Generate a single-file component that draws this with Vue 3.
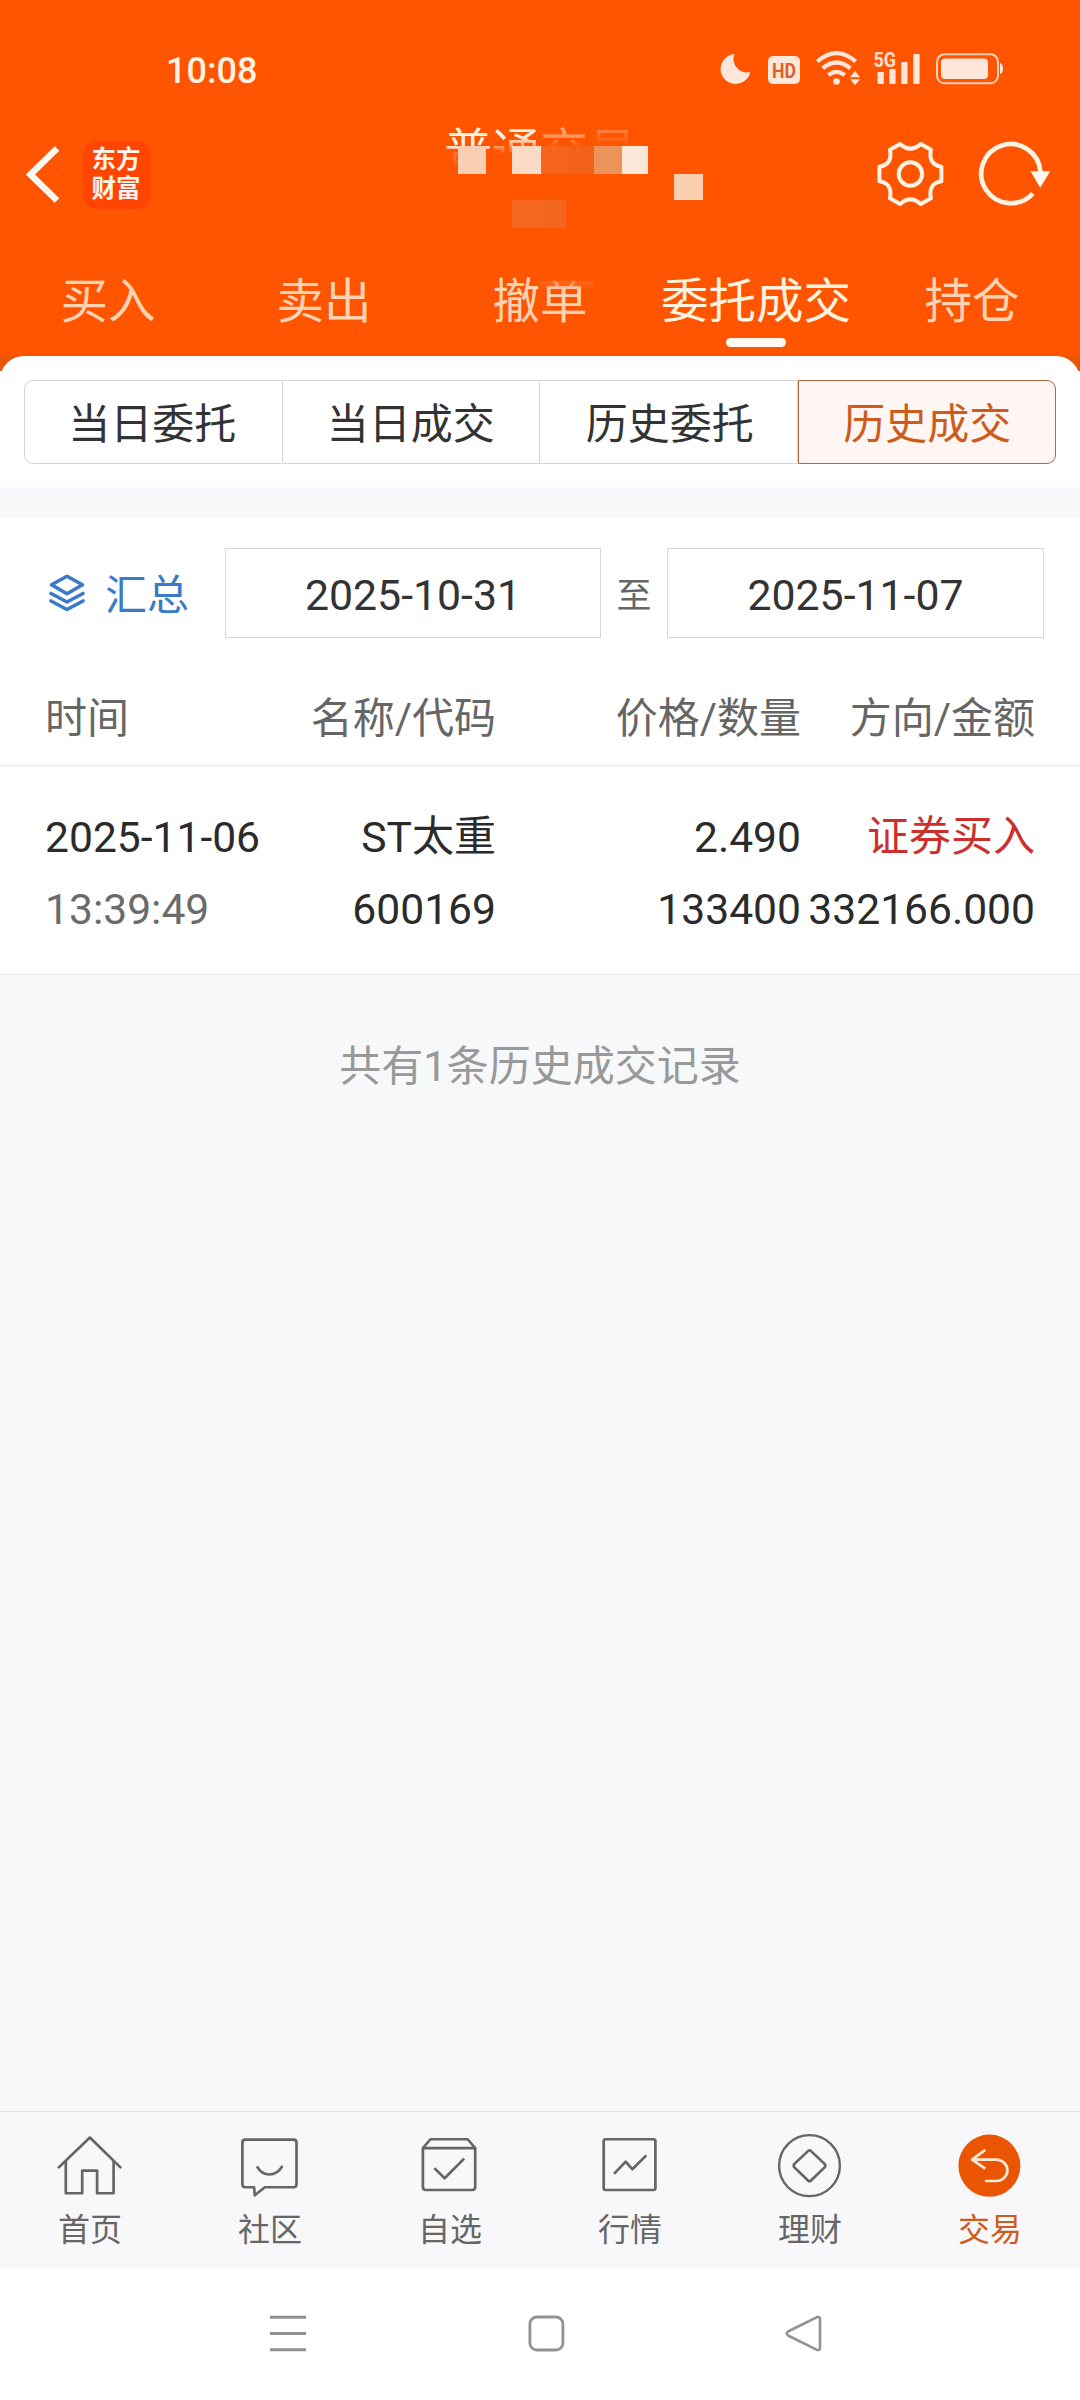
<script setup>
const tabs = ['买入', '卖出', '撤单', '委托成交', '持仓']
const segments = ['当日委托', '当日成交', '历史委托', '历史成交']
const titleChars = ['普', '通', '交', '易']
const mosaic = [
  { x: 458, y: 146, w: 28, h: 28, c: '#f9ceb2' },
  { x: 512, y: 146, w: 29, h: 28, c: '#fad9c5' },
  { x: 541, y: 146, w: 26, h: 28, c: '#f5661c' },
  { x: 567, y: 146, w: 27, h: 28, c: '#f4621a' },
  { x: 594, y: 146, w: 28, h: 28, c: '#ec935c' },
  { x: 622, y: 146, w: 26, h: 28, c: '#fbe7d7' },
  { x: 674, y: 174, w: 29, h: 26, c: '#facfb0' },
  { x: 512, y: 200, w: 29, h: 28, c: '#f66820' },
  { x: 541, y: 200, w: 25, h: 28, c: '#f2661e' },
]
const nav = ['首页', '社区', '自选', '行情', '理财', '交易']
</script>

<template>
  <div class="screen">
    <header class="head">
      <div class="status">
        <span class="clock">10:08</span>
        <svg class="sys" width="300" height="44" viewBox="710 46 300 44">
          <g fill="#ffe6da">
            <path d="M734.5 54 A15 15 0 1 0 750.3 72 A13.5 13.5 0 0 1 734.5 54Z" />
            <rect x="768" y="56" width="32" height="28" rx="5" />
            <circle cx="836.5" cy="81.5" r="3.3" />
            <path d="M850 77.3l5-6.6 5 6.6zM850 79.3l5 6 5-6z" />
            <rect x="877.5" y="72" width="6.3" height="12" rx="1" />
            <rect x="889.3" y="69" width="6.3" height="15" rx="1" />
            <rect x="901.2" y="62" width="6.3" height="22" rx="1" />
            <rect x="913.3" y="54" width="6.3" height="30" rx="1" />
            <rect x="941" y="58.5" width="47" height="20.5" rx="4" />
            <path d="M1000 63q3 1 3 5.500t-3 5.500z" />
          </g>
          <g fill="none" stroke="#ffe6da" stroke-width="4.200">
            <path d="M817.3 61.500Q836.500 44.800 855.700 61.500" />
            <path d="M822.700 68.400Q836.500 56.600 850.300 68.400" />
            <path d="M828.300 75.200Q836.500 68.400 844.700 75.200" />
          </g>
          <rect x="937" y="54.3" width="61" height="29" rx="7.500" fill="none" stroke="#ffd0b5" stroke-width="2" />
          <text x="784" y="78" text-anchor="middle" class="hd" textLength="24" lengthAdjust="spacingAndGlyphs">HD</text>
          <text x="873.500" y="67" class="g5" textLength="22.500" lengthAdjust="spacingAndGlyphs">5G</text>
        </svg>
      </div>

      <div class="bar">
        <svg width="34" height="60" viewBox="26 144 34 60" fill="none" stroke="#fff8ee" stroke-width="6.500">
          <path d="M57 148.500L30.500 174.500L57 200.500" stroke-linejoin="miter" />
        </svg>
        <div class="logo"><span>东方</span><span>财富</span></div>
        <div class="title"><span v-for="(c, i) in titleChars" :key="c" :class="'t' + i">{{ c }}</span></div>
        <svg class="tools" width="180" height="72" viewBox="874 138 180 72" fill="none" stroke="#fff3e3">
          <g transform="translate(910.4 174)" stroke-width="4" stroke-linejoin="round">
            <path d="M-10.300 -30Q0 -20.600 10.300 -30L20.500 -24.300Q17.500 -9.500 31 -7.300L31 7.300Q17.500 9.500 20.500 24.300L10.300 30Q0 20.600 -10.300 30L-20.500 24.300Q-17.500 9.500 -31 7.300L-31 -7.300Q-17.500 -9.500 -20.500 -24.300Z" />
            <circle r="11.700" />
          </g>
          <path d="M1032.800 193.500A29.600 29.600 0 1 1 1040.400 172" stroke-width="4.700" />
          <path d="M1030.500 171.200h19.700l-10 16.500z" fill="#fff8ee" stroke="none" />
        </svg>
      </div>

      <nav class="tabs">
        <div v-for="(t, i) in tabs" :key="t" class="tab" :class="{ on: i === 3, smear: i === 2 }">
          <span>{{ t }}</span><i />
        </div>
      </nav>
      <div v-for="(m, i) in mosaic" :key="i" class="px" :style="{ left: m.x + 'px', top: m.y + 'px', width: m.w + 'px', height: m.h + 'px', background: m.c }" />
    </header>

    <div class="shoulder">
      <section class="panel">
        <div class="segs">
          <div v-for="(s, i) in segments" :key="s" class="seg" :class="{ on: i === 3 }">{{ s }}</div>
        </div>
      </section>
    </div>
    <div class="gap" />

    <section class="filter">
      <svg width="36" height="40" viewBox="0 0 36 40" fill="none" stroke="#3b7ac6" stroke-width="3.600" stroke-linejoin="round" stroke-linecap="round">
        <path d="M18 3.200L33.500 11.800L18 20.700L2.500 11.800Z" />
        <path d="M2 20.500L18 29L34 20.500" />
        <path d="M2 28L18 36.500L34 28" />
      </svg>
      <span class="sum">汇总</span>
      <div class="date first">2025-10-31</div>
      <span class="to">至</span>
      <div class="date second">2025-11-07</div>
    </section>

    <div class="grid thead">
      <span>时间</span><span>名称/代码</span><span>价格/数量</span><span>方向/金额</span>
    </div>
    <section class="record">
      <div class="grid line">
        <span>2025-11-06</span><span>ST<b>太重</b></span><span>2.490</span><span class="buy">证券买入</span>
      </div>
      <div class="grid line">
        <span class="time">13:39:49</span><span>600169</span><span>133400</span><span>332166.000</span>
      </div>
    </section>

    <main class="rest">共有1条历史成交记录</main>

    <footer class="nav">
      <div v-for="(n, i) in nav" :key="n" class="item" :class="{ on: i === 5 }">
        <svg width="72" height="69.7" viewBox="0 0 72 72" preserveAspectRatio="none" fill="none" stroke="#666" stroke-width="2.700" stroke-linejoin="round">
          <template v-if="i === 0">
            <path d="M4 40.400L35.900 8.800L67.200 40.400" />
            <path d="M11.800 33V66.400H28.200V43H43.100V66.400H59.600V33" />
          </template>
          <template v-else-if="i === 1">
            <path d="M11.400 11H59.500Q62.500 11 62.500 14V57.200Q62.500 60.200 59.500 60.200H30.800L20.800 68.500L20.100 60.200H11.400Q8.400 60.200 8.400 57.200V14Q8.400 11 11.400 11Z" />
            <path d="M22.900 38.500Q27.500 47 35.600 47T48.400 38.200" />
          </template>
          <template v-else-if="i === 2">
            <path d="M8.900 19.600L16.500 10.600H53.600L61.200 19.600V60Q61.200 63 58.200 63H11.900Q8.900 63 8.900 60ZM8.900 19.800H61.200" />
            <path d="M20.400 40.400L30.600 50.900L50.200 30.600" />
          </template>
          <template v-else-if="i === 3">
            <rect x="9.700" y="10.600" width="51.700" height="52.400" rx="2" />
            <path d="M20 46.300L31.700 33.700L38.300 41.600L52.300 27.300" />
          </template>
          <template v-else-if="i === 4">
            <ellipse cx="35.500" cy="37.900" rx="30.400" ry="31.500" stroke-width="2.400" />
            <path d="M34 22.800Q35.500 21 37 22.800L50.600 36Q52 37.800 50.600 39.600L37 53.200Q35.500 54.800 34 53.200L20.400 39.600Q19 37.800 20.400 36Z" />
          </template>
          <template v-else>
            <ellipse cx="35.400" cy="37.900" rx="31" ry="32.200" fill="#ea5504" stroke="none" />
            <path d="M31.300 21.600L18 31.600L31.300 40.900M18 31.600H42.300A11 11 0 0 1 42.300 53.700H30.900" stroke="#ffe8d2" />
          </template>
        </svg>
        <span>{{ n }}</span>
      </div>
    </footer>

    <div class="android">
      <svg width="36" height="40" viewBox="0 0 36 40" stroke="#929292" stroke-width="3"><path d="M0 3.200H36M0 19.500H36M0 35.800H36" /></svg>
      <svg width="38" height="40" viewBox="0 0 38 40" fill="none" stroke="#929292" stroke-width="2.800"><rect x="2.900" y="3" width="33" height="33" rx="7" /></svg>
      <svg width="38" height="40" viewBox="0 0 38 40" fill="none" stroke="#929292" stroke-width="2.600" stroke-linejoin="round"><path d="M31.500 3.300Q35 2 35 5.500V33.500Q35 37 31.500 35.700L3 21.500Q0.500 19.500 3 17.500Z" /></svg>
    </div>
  </div>
</template>

<style>
body { background: #fff; }
</style>

<style scoped>
.screen { width: 1080px; height: 2400px; display: flex; flex-direction: column; overflow: hidden; background: #f7f8fa; font-family: Roboto, "Noto Sans CJK SC", sans-serif; font-size: 42px; color: #2b2b2b; }
.screen > * { flex-shrink: 0; }
.head { position: relative; height: 356px; background: #ff5500; }
.status { height: 134px; padding: 46px 70px 0 166px; box-sizing: border-box; display: flex; justify-content: space-between; color: #fff2e2; }
.clock { font-size: 36px; font-weight: 500; line-height: 51px; }
.hd { font: 700 21px Roboto, sans-serif; fill: #d9622a; }
.g5 { font: 700 20px Roboto, sans-serif; fill: #ffe0d0; }
.bar { height: 110px; padding: 0 26px; display: flex; align-items: flex-start; }
.bar > svg { margin-top: 10px; }
.logo { width: 68px; height: 68px; margin: 7px 0 0 23px; padding: 5px 2px 0 0; box-sizing: border-box; border-radius: 14px; background: #ff4500; color: #fff5ee; display: flex; flex-direction: column; align-items: center; font-size: 24.500px; font-weight: 700; line-height: 28.500px; }
.title { width: 193px; margin-left: 293px; margin-top: -12px; display: flex; font-size: 48px; line-height: 60px; color: #fff1e0; }
.t0 { -webkit-mask-image: linear-gradient(#000 24px, rgba(0,0,0,.25) 29px, transparent 46px); mask-image: linear-gradient(#000 24px, rgba(0,0,0,.25) 29px, transparent 46px); }
.t1 { -webkit-mask-image: linear-gradient(#000 15px, transparent 32px); mask-image: linear-gradient(#000 15px, transparent 32px); }
.t2 { opacity: .5; -webkit-mask-image: linear-gradient(#000 12px, transparent 25px); mask-image: linear-gradient(#000 12px, transparent 25px); }
.t3 { opacity: .28; -webkit-mask-image: linear-gradient(#000 8px, transparent 23px); mask-image: linear-gradient(#000 8px, transparent 23px); }
.bar > .tools { margin: 4px 0 0 auto; }
.px { position: absolute; }
.tabs { height: 112px; display: flex; }
.tab { position: relative; width: 216px; box-sizing: border-box; display: flex; flex-direction: column; align-items: center; white-space: nowrap; font-size: 47.500px; line-height: 70px; padding-top: 23px; color: #ffd2b2; }
.tab i { width: 60px; height: 9px; margin-top: 1px; border-radius: 4.500px; }
.tab.on { color: #fff3e0; }
.tab.on i { background: #fffaf2; }
.tab.smear::after { content: ""; position: absolute; left: 108px; top: 30px; width: 54px; height: 16px; background: linear-gradient(#ff5500 6px, rgba(255,108,36,.7) 8px, rgba(255,108,36,0)); }
.shoulder { height: 131px; background: linear-gradient(#ea5608 15px, #fff 15px); }
.panel { height: 131px; box-sizing: border-box; padding: 24px 24px 0; background: #fff; border-radius: 24px 24px 0 0; }
.segs { display: flex; height: 84px; }
.seg { flex: 1; box-sizing: border-box; border: 1px solid #d4d6d6; text-align: center; line-height: 88px; color: #333; }
.seg + .seg { border-left-width: 0; }
.seg:first-child { border-radius: 9px 0 0 9px; text-indent: -2px; }
.seg:nth-child(3) { text-indent: 3px; }
.seg.on { border: 1px solid #b0693f; border-radius: 0 9px 9px 0; background: #fff6f3; color: #cd5b1c; text-indent: 1px; }
.gap { height: 31px; background: #f7f8fa; }
.filter { height: 162px; padding: 30px 0 0 49px; box-sizing: border-box; background: #fff; display: flex; align-items: flex-start; }
.filter svg { margin-top: 25px; }
.sum { width: 84px; margin-left: 20px; line-height: 95px; color: #3b7ac6; }
.date { height: 90px; box-sizing: border-box; border: 1px solid #d8d8d8; text-align: center; font-size: 42.800px; line-height: 92px; color: #333; }
.first { width: 376px; margin-left: 36px; }
.second { width: 377px; }
.to { width: 66px; text-align: center; font-size: 35px; line-height: 98px; color: #666; }
.grid { display: grid; grid-template-columns: 190px 261px 305px 234px; padding: 0 45px; white-space: nowrap; }
.grid span { display: flex; justify-content: flex-end; }
.grid span:first-child { justify-content: flex-start; }
.thead { height: 87px; box-sizing: border-box; border-bottom: 3px solid #f5f5f5; background: #fff; color: #666; line-height: 77px; }
.record { height: 208px; box-sizing: border-box; padding-top: 33px; border-bottom: 1px solid #e8e9eb; background: #fff; }
.line { height: 72px; line-height: 74px; font-size: 42.600px; }
.line b { font-weight: 400; font-size: 42px; }
.line .buy { font-size: 42px; color: #cb302d; }
.line .time { color: #6b6b6b; }
.rest { height: 1136px; padding-top: 60px; box-sizing: border-box; text-align: center; line-height: 64px; color: #999; }
.nav { height: 157px; box-sizing: border-box; border-top: 1px solid #e2e3e5; background: #f8f8fa; display: flex; }
.item { width: 180px; padding-top: 16.700px; display: flex; flex-direction: column; align-items: center; font-size: 32px; color: #666; }
.item span { line-height: 48px; margin-top: 7.500px; }
.item.on { color: #cf5c1c; }
.android { flex: 1; background: #fff; display: flex; justify-content: space-between; padding: 46px 257px 0 270px; }
</style>
